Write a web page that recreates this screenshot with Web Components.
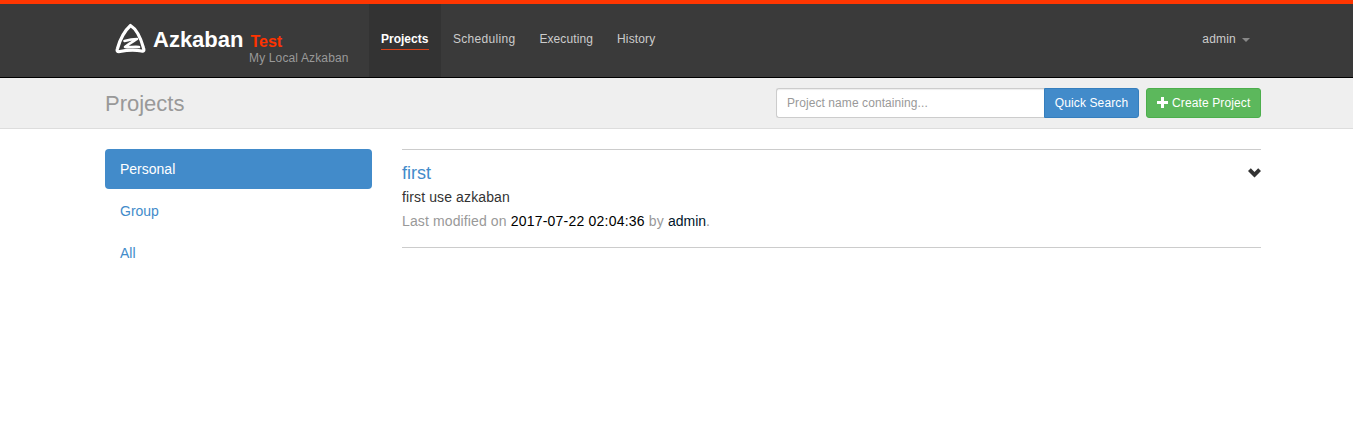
<!DOCTYPE html>
<html>
<head>
<meta charset="utf-8">
<title>Azkaban</title>
<style>
  html, body { margin: 0; padding: 0; background: #fff; }
  body { font-family: "Liberation Sans", Arial, sans-serif; font-size: 14px; color: #333; }
</style>
</head>
<body>
<az-topbar>
  <az-nav-item active>Projects</az-nav-item>
  <az-nav-item style="--track: .3px">Scheduling</az-nav-item>
  <az-nav-item style="--track: .1px">Executing</az-nav-item>
  <az-nav-item style="--track: .15px">History</az-nav-item>
</az-topbar>
<az-subheader>Projects</az-subheader>
<az-content>
  <az-side-link slot="side" active>Personal</az-side-link>
  <az-side-link slot="side">Group</az-side-link>
  <az-side-link slot="side">All</az-side-link>
  <az-project name="first" description="first use azkaban" modified="2017-07-22 02:04:36" user="admin"></az-project>
</az-content>

<script>
// Top navigation bar with logo, nav slot and user menu
class AzTopbar extends HTMLElement {
    constructor() {
        super();
        this.attachShadow({ mode: 'open' });
        this.shadowRoot.innerHTML = `
        <style>
            :host { display: block; height: 78px; box-sizing: border-box; background: #3a3a3a;
                    border-top: 4px solid #ff3601; border-bottom: 1px solid #000; }
            .bar { display: flex; height: 73px; padding: 0 103px 0 115px; }
            .brand { display: flex; width: 254px; flex: none; }
            svg { width: 32px; height: 31px; margin: 19px 6px 0 0; flex: none; }
            .name { color: #fff; font-size: 22px; font-weight: bold; line-height: 25px; margin-top: 23px; }
            .env { color: #ff3300; font-size: 16px; font-weight: bold; line-height: 20px; margin: 28px 0 0 7px; }
            .tag { position: absolute; left: 249px; top: 50px; color: #999; font-size: 12px; line-height: 16px; letter-spacing: .14px; }
            nav { display: flex; flex: 1; }
            .user { color: #ccc; font-size: 12px; line-height: 16px; margin-top: 27px; display: flex; letter-spacing: .2px; }
            .caret { width: 0; height: 0; border: 4px solid transparent; border-top-color: #888; border-bottom: 0; margin: 7px 0 0 6px; }
        </style>
        <div class="bar">
            <div class="brand">
                <svg viewBox="0 0 32 31" fill="none" stroke="#fff" stroke-linecap="round" stroke-linejoin="round">
                    <path stroke-width="3.2" d="M15.500 2.500 C20.500 5.500 25.500 14 28.500 25 C29.500 28 28.500 28.500 26.500 28 C20 26.500 12 27 5 28.500 C2.500 29 1.500 28 2.500 25.500 C5 16.500 10 7.500 15.500 2.500 Z"/>
                    <path stroke-width="2.6" d="M9.500 18 C13 17 18 16 22 16 C18 18.500 14 20.500 10 24 C14 24.500 19 23.500 24 24"/>
                </svg>
                <span class="name">Azkaban</span>
                <span class="env">Test</span>
                <span class="tag">My Local Azkaban</span>
            </div>
            <nav><slot></slot></nav>
            <div class="user">admin<span class="caret"></span></div>
        </div>`;
    }
}

class AzNavItem extends HTMLElement {
    constructor() {
        super();
        this.attachShadow({ mode: 'open' });
        this.shadowRoot.innerHTML = `
        <style>
            :host { display: block; padding: 27px 12px 0; color: #ccc; font-size: 12px; line-height: 16px; letter-spacing: var(--track, 0); }
            :host([active]) { background: #333; color: #fff; font-weight: bold; }
            span { display: block; padding-bottom: 2px; }
            :host([active]) span { border-bottom: 1px solid #d9431a; min-width: 48px; }
        </style>
        <span><slot></slot></span>`;
    }
}

// Grey band under the top bar: page title, search and create button
class AzSubheader extends HTMLElement {
    constructor() {
        super();
        this.attachShadow({ mode: 'open' });
        this.shadowRoot.innerHTML = `
        <style>
            :host { display: flex; align-items: center; justify-content: space-between; height: 51px; box-sizing: border-box;
                    padding: 0 92px 0 105px; background: #efefef; border-bottom: 1px solid #ddd; }
            h1 { margin: 2px 0 0; color: #999; font-size: 22px; font-weight: normal; line-height: 26px; }
            .tools { display: flex; margin-bottom: 1px; }
            input { width: 268px; height: 30px; box-sizing: border-box; padding: 0 10px; margin: 0; font: 12px "Liberation Sans", Arial, sans-serif; letter-spacing: .08px;
                    border: 1px solid #ccc; border-right: 0; border-radius: 3px 0 0 3px; background: #fff; outline: 0;
                    box-shadow: inset 0 1px 1px rgba(0,0,0,.075); }
            input::placeholder { color: #999; opacity: 1; }
            button { height: 30px; box-sizing: border-box; margin: 0; padding: 0 10px; color: #fff; font: 12px "Liberation Sans", Arial, sans-serif; letter-spacing: .12px;
                     border: 1px solid transparent; cursor: pointer; white-space: nowrap; }
            .search { width: 95px; padding: 0; background: #428bca; border-color: #357ebd; border-radius: 0 3px 3px 0; }
            .create { display: flex; align-items: center; width: 115px; margin-left: 7px; background: #5cb85c; border-color: #4cae4c; border-radius: 3px; }
            svg { width: 11px; height: 11px; margin-right: 4px; flex: none; }
        </style>
        <h1><slot></slot></h1>
        <div class="tools">
            <input type="text" placeholder="Project name containing...">
            <button class="search">Quick Search</button>
            <button class="create"><svg viewBox="0 0 11 11"><path fill="#fff" d="M4 0h3v4h4v3H7v4H4V7H0V4h4z"/></svg>Create Project</button>
        </div>`;
    }
}

class AzContent extends HTMLElement {
    constructor() {
        super();
        this.attachShadow({ mode: 'open' });
        this.shadowRoot.innerHTML = `
        <style>
            :host { display: flex; gap: 30px; padding: 20px 92px 0 105px; }
            .side { display: flex; flex-direction: column; gap: 2px; width: 267px; flex: none; }
            .main { flex: 1; min-width: 0; }
        </style>
        <div class="side"><slot name="side"></slot></div>
        <div class="main"><slot></slot></div>`;
    }
}

class AzSideLink extends HTMLElement {
    constructor() {
        super();
        this.attachShadow({ mode: 'open' });
        this.shadowRoot.innerHTML = `
        <style>
            :host { display: block; padding: 10px 15px; height: 40px; box-sizing: border-box; color: #428bca; font-size: 14px; line-height: 20px; border-radius: 4px; }
            :host([active]) { background: #428bca; color: #fff; }
        </style>
        <slot></slot>`;
    }
}

// One project entry in the list
class AzProject extends HTMLElement {
    constructor() {
        super();
        const template = document.createElement('template');
        template.innerHTML = `
        <style>
            :host { display: block; border-top: 1px solid #ccc; border-bottom: 1px solid #ccc; height: 99px; box-sizing: border-box; padding-top: 12px; position: relative; }
            h4 { margin: 0; color: #428bca; font-size: 18px; font-weight: normal; line-height: 22px; }
            p { margin: 4px 0 0; font-size: 14px; line-height: 20px; }
            .desc { margin-top: 3px; letter-spacing: .12px; }
            .meta { color: #999; letter-spacing: .12px; }
            .meta b { color: #000; font-weight: normal; letter-spacing: .22px; }
            .meta .user { color: #00152b; letter-spacing: 0; }
            svg { position: absolute; right: 0; top: 18px; width: 13px; height: 10px; }
        </style>
        <h4></h4>
        <p class="desc"></p>
        <p class="meta">Last modified on <b class="when"></b> by <span class="user"></span>.</p>
        <svg viewBox="0 0 13 10"><path fill="#333" d="M0 3 L2.800 .2 L6.500 3.900 L10.200 .2 L13 3 L6.500 9.500 Z"/></svg>`;
        this.attachShadow({ mode: 'open' });
        this.shadowRoot.appendChild(template.content.cloneNode(true));
    }

    connectedCallback() {
        const root = this.shadowRoot;
        root.querySelector('h4').textContent = this.getAttribute('name');
        root.querySelector('.desc').textContent = this.getAttribute('description');
        root.querySelector('.when').textContent = this.getAttribute('modified');
        root.querySelector('.user').textContent = this.getAttribute('user');
    }
}

customElements.define('az-topbar', AzTopbar);
customElements.define('az-nav-item', AzNavItem);
customElements.define('az-subheader', AzSubheader);
customElements.define('az-content', AzContent);
customElements.define('az-side-link', AzSideLink);
customElements.define('az-project', AzProject);
</script>
</body>
</html>
